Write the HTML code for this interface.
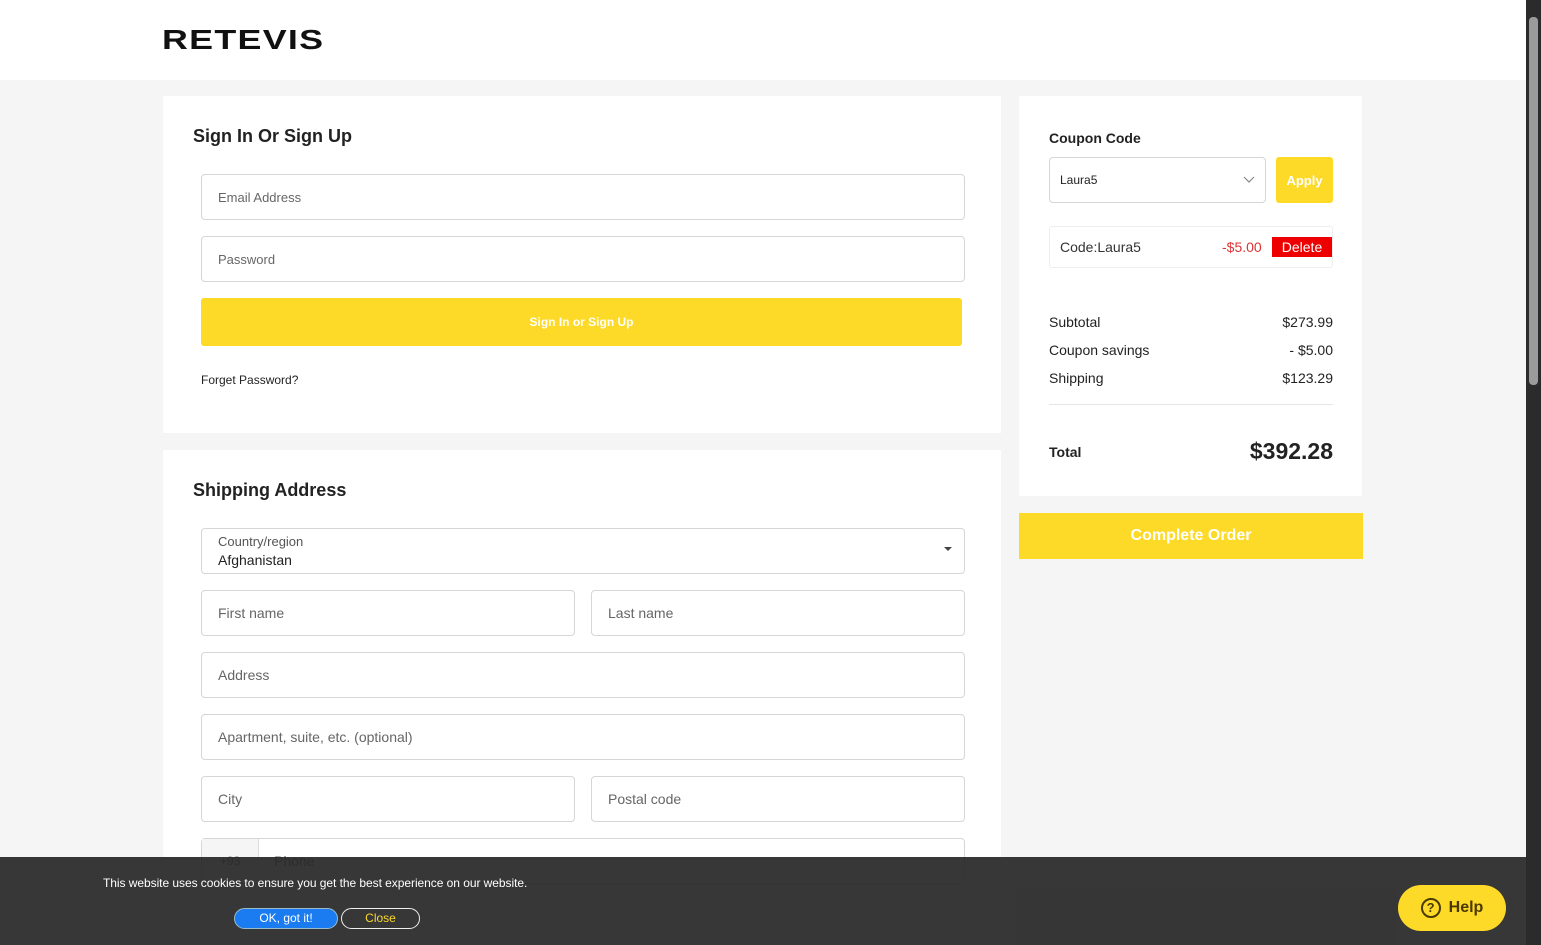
<!DOCTYPE html>
<html><head><meta charset="utf-8"><style>
*{box-sizing:border-box;margin:0;padding:0}
body{width:1541px;height:945px;overflow:hidden;background:#f5f5f5;font-family:"Liberation Sans",sans-serif;color:#222;position:relative}
.hdr{position:absolute;left:0;top:0;width:1526px;height:80px;background:#fff}
.logo{position:absolute;left:162px;top:26px;font:900 28px/28px "Liberation Sans",sans-serif;letter-spacing:1px;color:#111;transform:scaleX(1.28);transform-origin:left}
.card{position:absolute;background:#fff}
h2{position:absolute;font-size:18px;font-weight:bold;color:#222}
.in{position:absolute;border:1px solid #d6d6d6;border-radius:4px;background:#fff;font-size:14px;color:#666;padding-left:16px;display:flex;align-items:center}
.btn{position:absolute;background:#fdd928;color:#fff;font-weight:bold;display:flex;align-items:center;justify-content:center;border-radius:3px}
.row{position:absolute;left:1049px;width:284px;font-size:14px;display:flex;justify-content:space-between;color:#222}
.sb{position:absolute;left:1526px;top:0;width:15px;height:945px;background:#2b2b2b}
.th{position:absolute;left:1529px;top:17px;width:9px;height:368px;background:#9b9b9b;border-radius:4px}
.ck{position:absolute;left:0;top:857px;width:1526px;height:88px;background:rgba(40,40,40,.93)}
</style></head><body>
<div class="hdr"><div class="logo">RETEVIS</div></div>
<div class="card" style="left:163px;top:96px;width:838px;height:337px"></div>
<h2 style="left:193px;top:126px">Sign In Or Sign Up</h2>
<div class="in" style="left:201px;top:174px;width:764px;height:46px;font-size:13px">Email Address</div>
<div class="in" style="left:201px;top:236px;width:764px;height:46px;font-size:13px">Password</div>
<div class="btn" style="left:201px;top:298px;width:761px;height:48px;font-size:12px">Sign In or Sign Up</div>
<div style="position:absolute;left:201px;top:373px;font-size:12px">Forget Password?</div>
<div class="card" style="left:163px;top:450px;width:838px;height:495px"></div>
<h2 style="left:193px;top:480px">Shipping Address</h2>
<div class="in" style="left:201px;top:528px;width:764px;height:46px;display:block;padding-top:5px"><div style="font-size:13px;color:#555">Country/region</div><div style="font-size:14px;color:#222;margin-top:3px">Afghanistan</div><div style="position:absolute;right:12px;top:18px;border:4px solid transparent;border-top:4px solid #444"></div></div>
<div class="in" style="left:201px;top:590px;width:374px;height:46px">First name</div>
<div class="in" style="left:591px;top:590px;width:374px;height:46px">Last name</div>
<div class="in" style="left:201px;top:652px;width:764px;height:46px">Address</div>
<div class="in" style="left:201px;top:714px;width:764px;height:46px">Apartment, suite, etc. (optional)</div>
<div class="in" style="left:201px;top:776px;width:374px;height:46px">City</div>
<div class="in" style="left:591px;top:776px;width:374px;height:46px">Postal code</div>
<div class="in" style="left:201px;top:838px;width:764px;height:46px;padding-left:72px">Phone<div style="position:absolute;left:0;top:0;width:57px;height:44px;background:#f5f5f5;border-right:1px solid #ddd;font-size:12px;display:flex;align-items:center;justify-content:center">+93</div></div>
<div class="card" style="left:1019px;top:96px;width:343px;height:400px"></div>
<div style="position:absolute;left:1049px;top:130px;font-size:14px;font-weight:bold">Coupon Code</div>
<div class="in" style="left:1049px;top:157px;width:217px;height:46px;padding-left:10px;font-size:12px;color:#222">Laura5<svg style="position:absolute;right:10px;top:18px" width="12" height="8"><path d="M1 1l5 5 5-5" fill="none" stroke="#888" stroke-width="1.2"/></svg></div>
<div class="btn" style="left:1276px;top:157px;width:57px;height:46px;font-size:13px">Apply</div>
<div style="position:absolute;left:1049px;top:226px;width:284px;height:42px;border:1px solid #eee;border-radius:3px"></div>
<div style="position:absolute;left:1060px;top:239px;font-size:14px;color:#333">Code:Laura5</div>
<div style="position:absolute;left:1222px;top:239px;font-size:14px;color:#d33">-$5.00</div>
<div style="position:absolute;left:1272px;top:237px;width:60px;height:20px;background:#e00;color:#fff;font-size:14px;text-align:center;line-height:20px">Delete</div>
<div class="row" style="top:314px"><span>Subtotal</span><span>$273.99</span></div>
<div class="row" style="top:342px"><span>Coupon savings</span><span>- $5.00</span></div>
<div class="row" style="top:370px"><span>Shipping</span><span>$123.29</span></div>
<div style="position:absolute;left:1049px;top:404px;width:284px;border-top:1px solid #e5e5e5"></div>
<div class="row" style="top:438px;align-items:center"><span style="font-weight:bold;font-size:14px">Total</span><span style="font-weight:bold;font-size:23px">$392.28</span></div>
<div class="btn" style="left:1019px;top:513px;width:344px;height:46px;font-size:16px;border-radius:0">Complete Order</div>
<div class="ck">
<div style="position:absolute;left:103px;top:19px;color:#fff;font-size:12px;letter-spacing:-0.05px">This website uses cookies to ensure you get the best experience on our website.</div>
<div style="position:absolute;left:234px;top:51px;width:104px;height:21px;border-radius:11px;background:#1a7cf0;border:1px solid #9bc;color:#fff;font-size:12px;text-align:center;line-height:19px">OK, got it!</div>
<div style="position:absolute;left:341px;top:51px;width:79px;height:21px;border-radius:11px;border:1px solid #eee;color:#fdd928;font-size:12px;text-align:center;line-height:19px">Close</div>
<div style="position:absolute;left:1398px;top:28px;width:108px;height:46px;border-radius:23px;background:#fdd928;color:#4a3a00;font-weight:bold;font-size:16px;display:flex;align-items:center;justify-content:center;gap:8px"><span style="width:20px;height:20px;border:2px solid #4a3a00;border-radius:50%;font-size:13px;line-height:16px;text-align:center">?</span>Help</div>
</div>
<div class="sb"></div><div class="th"></div>
</body></html>
